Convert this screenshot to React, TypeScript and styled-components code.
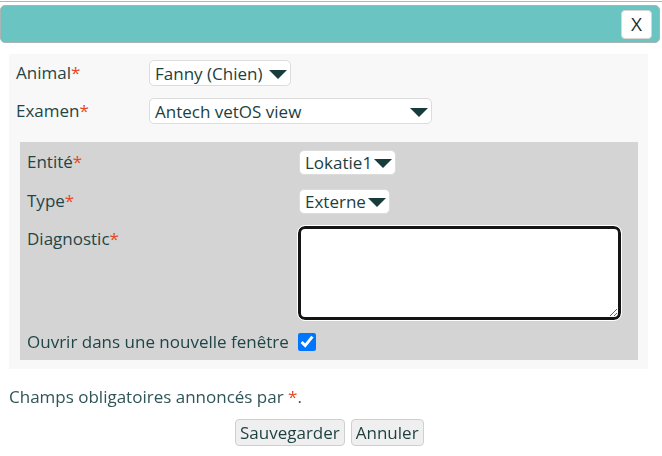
import * as React from "react";
import styled, { createGlobalStyle } from "styled-components";

const GlobalStyle = createGlobalStyle`
  body {
    margin: 0;
    background: #ffffff;
    font-family: "Open Sans", "Noto Sans", sans-serif;
    font-size: 17px;
    color: #1f4547;
  }
`;

const Dialog = styled.div`
  width: 662px;
  border-top: 1px solid #b5b5b5;
  margin-top: 1px;
  padding-top: 3px;
`;

const TitleBar = styled.div`
  box-sizing: border-box;
  width: 660px;
  height: 38px;
  background: #6ac5c2;
  border: 1px solid #a9b5b4;
  border-radius: 5px;
  display: flex;
  justify-content: flex-end;
  align-items: center;
  padding-right: 7px;
`;

const CloseButton = styled.button`
  box-sizing: border-box;
  width: 31px;
  height: 29px;
  background: #ffffff;
  border: 1px solid #d6d6d6;
  border-radius: 4px;
  font-family: inherit;
  font-size: 19px;
  color: #1b2f3a;
  padding: 0;
`;

const Panel = styled.div`
  box-sizing: border-box;
  width: 639px;
  margin: 11px 0 0 9px;
  background: #f8f8f8;
  padding: 6px 10px 9px 0;
`;

const Row = styled.div<{ $labelWidth: number; $gap?: number; $top?: boolean }>`
  display: grid;
  grid-template-columns: ${(p) => p.$labelWidth}px 1fr;
  align-items: ${(p) => (p.$top ? "start" : "center")};
  justify-items: start;
  padding-left: 7px;
  margin-bottom: ${(p) => p.$gap ?? 12}px;
`;

const Label = styled.label`
  line-height: 26px;
  white-space: nowrap;
`;

const Star = styled.span`
  color: #e8471f;
`;

const SelectBox = styled.div<{ $width?: number; $height?: number }>`
  box-sizing: border-box;
  width: ${(p) => (p.$width ? `${p.$width}px` : "auto")};
  height: ${(p) => p.$height ?? 26}px;
  background: #ffffff;
  border: 1px solid #dcdcdc;
  border-radius: 5px;
  display: flex;
  align-items: center;
  justify-content: space-between;
  gap: 2px;
  padding: 0 3px 0 5px;
  color: #1c3f40;
  font-size: 17px;
  white-space: nowrap;
`;

const Caret = styled.span`
  flex: none;
  width: 0;
  height: 0;
  border-left: 9px solid transparent;
  border-right: 9px solid transparent;
  border-top: 9px solid #163c3c;
  margin-top: 3px;
`;

const Section = styled.div`
  margin: 18px 0 0 11px;
  background: #d4d4d4;
  padding: 7px 0 5px 0;
`;

const TextArea = styled.textarea`
  box-sizing: border-box;
  width: 323px;
  height: 94px;
  border: 3px solid #141414;
  border-radius: 7px;
  outline: 1px solid #ffffff;
  outline-offset: 0;
  resize: both;
  background: #ffffff;
  font-family: inherit;
  font-size: 15px;
  margin: 0 0 0 -1px;
  caret-color: #0f3a3a;
`;

const CheckBox = styled.input`
  width: 18px;
  height: 18px;
  margin: 0 0 0 -1px;
  accent-color: #0075ff;
`;

const Note = styled.p`
  margin: 16px 0 0 9px;
  line-height: 23px;
  color: #2f5557;
`;

const Actions = styled.div`
  display: flex;
  gap: 6px;
  margin: 11px 0 0 235px;
`;

const ActionButton = styled.button`
  box-sizing: border-box;
  height: 27px;
  background: #efefef;
  border: 1px solid #cfcfcf;
  border-radius: 4px;
  font-family: inherit;
  font-size: 17px;
  color: #1c3f40;
  padding: 0 4px;
`;

export default function App() {
  const areaRef = React.useRef<HTMLTextAreaElement>(null);
  React.useEffect(() => {
    areaRef.current?.focus();
  }, []);

  return (
    <>
      <GlobalStyle />
      <Dialog>
        <TitleBar>
          <CloseButton>X</CloseButton>
        </TitleBar>
        <Panel>
          <Row $labelWidth={133}>
            <Label>
              Animal<Star>*</Star>
            </Label>
            <SelectBox $width={142}>
              Fanny (Chien)
              <Caret />
            </SelectBox>
          </Row>
          <Row $labelWidth={133} $gap={0}>
            <Label>
              Examen<Star>*</Star>
            </Label>
            <SelectBox $width={283}>
              Antech vetOS view
              <Caret />
            </SelectBox>
          </Row>
          <Section>
            <Row $labelWidth={272} $gap={13}>
              <Label>
                Entité<Star>*</Star>
              </Label>
              <SelectBox $height={25}>
                Lokatie1
                <Caret />
              </SelectBox>
            </Row>
            <Row $labelWidth={272} $gap={12}>
              <Label>
                Type<Star>*</Star>
              </Label>
              <SelectBox $height={25}>
                Externe
                <Caret />
              </SelectBox>
            </Row>
            <Row $labelWidth={272} $gap={9} $top>
              <Label>
                Diagnostic<Star>*</Star>
              </Label>
              <TextArea ref={areaRef} />
            </Row>
            <Row $labelWidth={272} $gap={0}>
              <Label>Ouvrir dans une nouvelle fenêtre</Label>
              <CheckBox type="checkbox" defaultChecked />
            </Row>
          </Section>
        </Panel>
        <Note>
          Champs obligatoires annoncés par <Star>*</Star>.
        </Note>
        <Actions>
          <ActionButton>Sauvegarder</ActionButton>
          <ActionButton>Annuler</ActionButton>
        </Actions>
      </Dialog>
    </>
  );
}
